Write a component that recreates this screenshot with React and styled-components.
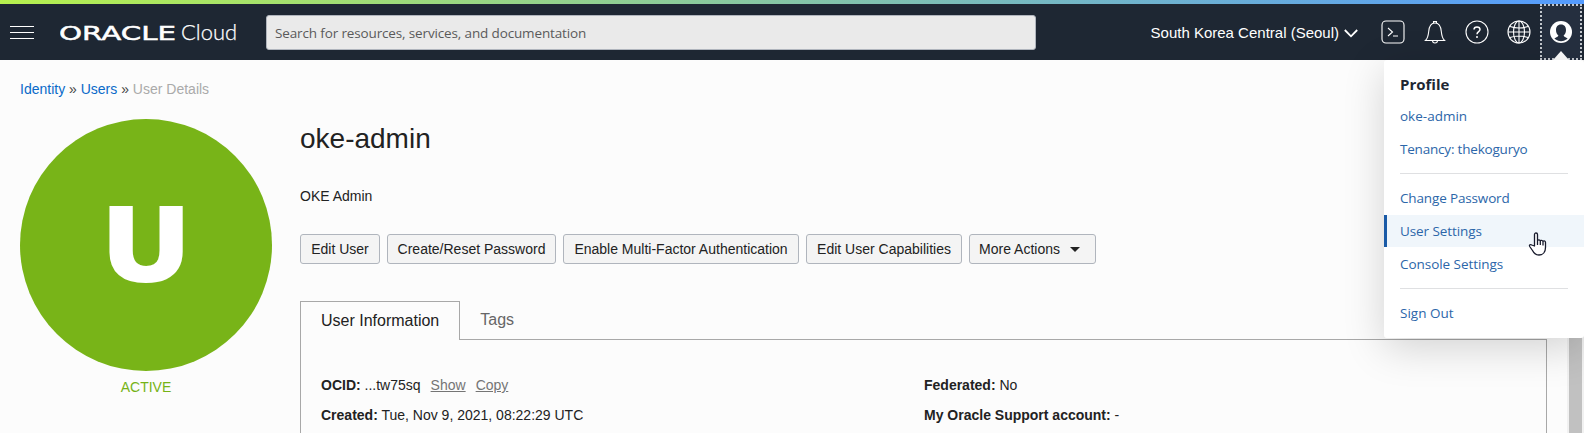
import React from "react";
import styled, { createGlobalStyle } from "styled-components";

const sans = `"Liberation Sans", Arial, sans-serif`;
const humanist = `"Open Sans", "Noto Sans", sans-serif`;

const GlobalStyle = createGlobalStyle`
  * { box-sizing: border-box; }
  html, body { margin: 0; height: 433px; overflow: hidden; }
  body { background: #fcfcfc; color: #222; font: 14px/20px ${sans}; }
  a { color: inherit; text-decoration: none; }
`;

const Page = styled.div`
  position: relative;
  display: flex;
  flex-direction: column;
  width: 1584px;
  height: 433px;
  overflow: hidden;
`;

const Stripe = styled.div`
  flex: none;
  height: 4px;
  background: linear-gradient(90deg, #b6f04e 0%, #549bff 100%);
`;

const Header = styled.header`
  flex: none;
  display: flex;
  align-items: center;
  height: 56px;
  padding: 0 2px 0 10px;
  background: #1e2733;
  color: #fff;
`;

const MenuButton = styled.button`
  display: flex;
  flex-direction: column;
  justify-content: space-between;
  width: 24px;
  height: 13px;
  margin: 0 26px 0 0;
  padding: 0;
  border: 0;
  background: none;
  span { height: 1px; background: #fff; }
`;

const Logo = styled.svg`
  flex: none;
  width: 180px;
  height: 30px;
  margin-right: 26px;
  fill: #fff;
`;

const Search = styled.div`
  flex: none;
  width: 770px;
  height: 35px;
  padding: 0 8px;
  border: 1px solid #b0b5bd;
  border-radius: 3px;
  background: #eaeaea;
  color: #5a5a5a;
  font: 13.5px/34px ${humanist};
  letter-spacing: -0.14px;
`;

const Region = styled.button`
  display: flex;
  align-items: center;
  gap: 5px;
  margin-left: auto;
  margin-right: 23px;
  padding: 2px 0 0;
  border: 0;
  background: none;
  color: #fff;
  font: 15px/20px ${sans};
  white-space: nowrap;
`;

const Tools = styled.nav`
  display: flex;
  align-items: center;
  height: 100%;
  gap: 18px;
`;

const ToolIcon = styled.svg`
  display: block;
  width: 24px;
  height: 24px;
  fill: none;
  stroke: #fff;
  stroke-width: 1.1;
`;

const ProfileButton = styled.button`
  position: relative;
  display: flex;
  justify-content: center;
  align-items: center;
  width: 42px;
  height: 56px;
  margin-left: -9px;
  padding: 0;
  border: 2px dotted #c3c7cd;
  background: #252f3f;
  &::after {
    content: "";
    position: absolute;
    left: 11px;
    bottom: -2px;
    border: 8px solid transparent;
    border-top: 0;
    border-bottom: 9px solid #fcfcfc;
  }
`;

const Body = styled.div`
  flex: 1;
  display: flex;
  min-height: 0;
`;

const Content = styled.main`
  flex: 1;
  padding: 19px 20px 0;
`;

const Scrollbar = styled.div`
  width: 17px;
  padding: 0 2px;
  background: #f1f1f1;
`;

const Thumb = styled.div`
  height: 100%;
  background: #c1c1c1;
`;

const Breadcrumb = styled.div`
  height: 40px;
  color: #444;
  font-size: 14px;
  a { color: #0a6ac9; }
  span { color: #aaa; }
`;

const Details = styled.div`
  display: flex;
  gap: 28px;
`;

const Badge = styled.div`
  width: 252px;
  color: #76b317;
  text-align: center;
`;

const Circle = styled.div`
  height: 252px;
  margin-bottom: 6px;
  border-radius: 50%;
  background: #78b418;
  color: #fff;
  svg { display: block; }
`;

const Info = styled.section`
  flex: 1;
  max-width: 1247px;
`;

const Title = styled.h1`
  margin: 0;
  font-size: 28px;
  font-weight: 400;
  line-height: 40px;
`;

const Description = styled.p`
  margin: 27px 0 28px;
`;

const Actions = styled.div`
  display: flex;
  gap: 7px;
  margin-bottom: 37px;
`;

const Button = styled.button`
  display: flex;
  align-items: center;
  justify-content: center;
  gap: 10px;
  width: ${(p) => p.$width}px;
  height: 30px;
  padding: 0 ${(p) => (p.$menu ? 6 : 0)}px 0 0;
  border: 1px solid #b0b5bd;
  border-radius: 3px;
  background: #f4f4f4;
  color: #222;
  font: 14px/20px ${sans};
  white-space: nowrap;
`;

const Caret = styled.span`
  border: 5px solid transparent;
  border-top-color: #222;
  border-bottom: 0;
`;

const Tabs = styled.div`
  display: flex;
  height: 39px;
`;

const Tab = styled.div`
  padding: 9px 20px 0;
  border: ${(p) => (p.$active ? "1px solid #a8a8a8" : "0")};
  border-bottom: ${(p) => (p.$active ? "0" : "1px solid #a8a8a8")};
  color: ${(p) => (p.$active ? "#222" : "#666")};
  font-size: 16px;
  white-space: nowrap;
  flex: ${(p) => (p.$active ? "0 0 160px" : "1")};
`;

const Panel = styled.div`
  display: grid;
  grid-template-columns: 603px 1fr;
  align-content: start;
  row-gap: 10px;
  height: 120px;
  padding: 35px 20px;
  border: 1px solid #a8a8a8;
  border-width: 0 1px;
`;

const Field = styled.div`
  a { margin-left: 10px; color: #757575; text-decoration: underline; }
`;

const Menu = styled.aside`
  position: absolute;
  top: 60px;
  right: 0;
  width: 200px;
  height: 278px;
  padding-top: 12px;
  border-radius: 3px;
  background: #fff;
  box-shadow: 0 10px 40px rgba(0, 0, 0, 0.17);
  font: 13.5px/24px ${humanist};
`;

const MenuTitle = styled.div`
  height: 28px;
  padding-left: 16px;
  color: #1e2733;
  font-size: 15px;
  font-weight: 700;
`;

const MenuItem = styled.a`
  display: block;
  height: ${(p) => (p.$selected ? 32 : 33)}px;
  margin-bottom: ${(p) => (p.$selected ? 1 : 0)}px;
  padding-left: ${(p) => (p.$selected ? 13 : 16)}px;
  border-left: ${(p) => (p.$selected ? "3px solid #1a5aa6" : "0")};
  background: ${(p) => (p.$selected ? "#f0f6fb" : "transparent")};
  color: #2c66a9;
  line-height: 32px;
  letter-spacing: ${(p) => p.$track || 0}px;
`;

const Rule = styled.hr`
  height: 1px;
  margin: 7px 16px 8px;
  border: 0;
  background: #dfe0e2;
`;

const Cursor = styled.svg`
  position: absolute;
  left: 144px;
  top: 172px;
  width: 20px;
  height: 24px;
`;

const fields = [
  ["OCID:", "...tw75sq", ["Show", "Copy"]],
  ["Federated:", "No", []],
  ["Created:", "Tue, Nov 9, 2021, 08:22:29 UTC", []],
  ["My Oracle Support account:", "-", []],
];

export default function App() {
  return (
    <Page>
      <GlobalStyle />
      <Stripe />
      <Header>
        <MenuButton aria-label="Navigation"><span /><span /><span /></MenuButton>
        <Logo viewBox="0 0 180 30">
          <text x="-1" y="22.5" fontFamily="DejaVu Sans" fontSize="20" stroke="#fff" strokeWidth="0.5" textLength="117" lengthAdjust="spacingAndGlyphs">ORACLE</text>
          <text x="121" y="22.5" fontFamily="Lato" fontWeight="300" fontSize="22" stroke="#fff" strokeWidth="0.25" textLength="56" lengthAdjust="spacingAndGlyphs">Cloud</text>
        </Logo>
        <Search>Search for resources, services, and documentation</Search>
        <Region>
          South Korea Central (Seoul)
          <svg width="14" height="9" viewBox="0 0 14 9" fill="none" stroke="#fff" strokeWidth="1.8"><path d="M.8 1 7 7.3 13.2 1" /></svg>
        </Region>
        <Tools>
          <ToolIcon viewBox="0 0 24 24"><rect x="1" y="1" width="22" height="22" rx="4" /><path d="m7 8 4.500 4L7 16M12 16h5" /></ToolIcon>
          <ToolIcon viewBox="0 0 24 24"><path d="M2.500 20.500c2-1.800 2.700-4 3.200-9C6.200 6 8 3 12 3s5.800 3 6.300 8.500c.5 5 1.200 7.200 3.200 9zM10.500 3V1.500h3V3M9.500 20.500a2.500 2.500 0 0 0 5 0" /></ToolIcon>
          <ToolIcon viewBox="0 0 24 24"><circle cx="12" cy="12" r="11" /><path strokeWidth="1.5" d="M9 9.500C9 6 15 6 15 9.500c0 2-3 2.200-3 4.700M12 16v2" /></ToolIcon>
          <ToolIcon viewBox="0 0 24 24"><circle cx="12" cy="12" r="11" /><ellipse cx="12" cy="12" rx="5.500" ry="11" /><path d="M12 1v22M1 12h22M3 6.500q9 3 18 0M3 17.500q9-3 18 0" /></ToolIcon>
          <ProfileButton aria-label="Profile">
            <svg width="22" height="22" viewBox="0 0 22 22"><circle cx="11" cy="11" r="11" fill="#fff" /><path fill="#252f3f" d="M11 3.500c-3.400 0-5 2.300-5 5.600 0 2.300.9 4.300 2.400 5.500-.4 1.500-2.300 1.900-4 2.700l.9.900Q11 22.500 16.800 18.200l.8-.9c-1.700-.8-3.600-1.200-4-2.700C15.100 13.400 16 11.400 16 9.100c0-3.300-1.600-5.600-5-5.600z" /></svg>
          </ProfileButton>
        </Tools>
      </Header>
      <Body>
        <Content>
          <Breadcrumb><a href="#identity">Identity</a> » <a href="#users">Users</a> » <span>User Details</span></Breadcrumb>
          <Details>
            <Badge>
              <Circle>
                <svg width="252" height="252" viewBox="0 0 252 252"><text transform="translate(126 163) scale(1.13 1)" textAnchor="middle" fill="#fff" fontFamily="Open Sans" fontWeight="800" fontSize="106">U</text></svg>
              </Circle>
              ACTIVE
            </Badge>
            <Info>
              <Title>oke-admin</Title>
              <Description>OKE Admin</Description>
              <Actions>
                <Button $width={80}>Edit User</Button>
                <Button $width={169}>Create/Reset Password</Button>
                <Button $width={236}>Enable Multi-Factor Authentication</Button>
                <Button $width={156}>Edit User Capabilities</Button>
                <Button $width={127} $menu>More Actions<Caret /></Button>
              </Actions>
              <Tabs><Tab $active>User Information</Tab><Tab>Tags</Tab></Tabs>
              <Panel>
                {fields.map(([label, value, links]) => (
                  <Field key={label}><b>{label}</b> {value}{links.map((l) => <a key={l} href="#ocid">{l}</a>)}</Field>
                ))}
              </Panel>
            </Info>
          </Details>
        </Content>
        <Scrollbar><Thumb /></Scrollbar>
      </Body>
      <Menu>
        <MenuTitle>Profile</MenuTitle>
        <MenuItem>oke-admin</MenuItem>
        <MenuItem $track={-0.2}>Tenancy: thekoguryo</MenuItem>
        <Rule />
        <MenuItem $track={-0.15}>Change Password</MenuItem>
        <MenuItem $track={-0.08} $selected>User Settings</MenuItem>
        <MenuItem $track={-0.05}>Console Settings</MenuItem>
        <Rule />
        <MenuItem>Sign Out</MenuItem>
        <Cursor viewBox="0 0 20 24"><path fill="#fff" stroke="#171a2c" strokeWidth="1.3" strokeLinejoin="round" d="M6.500 14V2.500c0-2 3-2 3 0V9c0-1.500 2.800-1.500 2.800.3 0-1.500 2.700-1.300 2.700.5 0-1.300 2.500-1.200 2.500.7v5c0 4.500-2.500 7.500-6.500 7.500-3.500 0-5-1.500-6.500-4.500l-2.800-4c-.9-1.500.8-2.500 2-1.500zM9.500 9v4M12.300 9.300V13M15 10v3.500" /></Cursor>
      </Menu>
    </Page>
  );
}
